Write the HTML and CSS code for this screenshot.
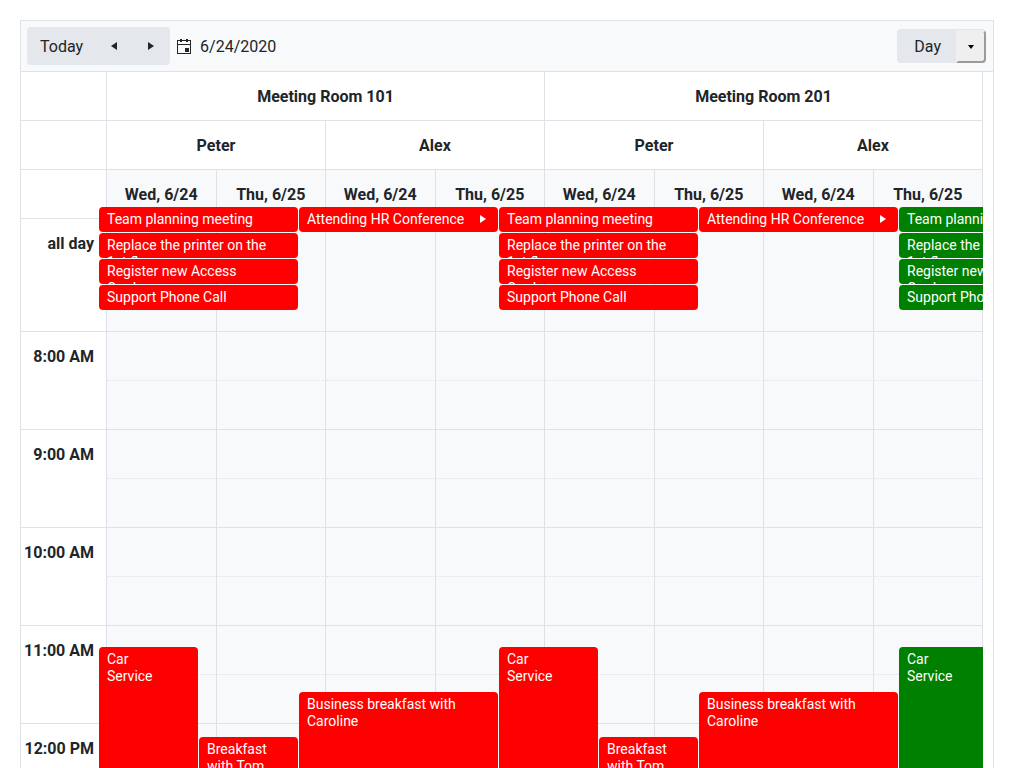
FILE: index.html
```html
<!DOCTYPE html>
<html lang="en">
<head>
<meta charset="utf-8">
<title>Scheduler</title>
<link rel="stylesheet" href="styles.css">
</head>
<body>
<main class="scheduler">
  <header class="toolbar">
    <div class="nav-group">
      <button type="button" class="btn">Today</button>
      <button type="button" class="btn btn-icon" aria-label="Previous">
        <svg width="16" height="16" viewBox="0 0 16 16" fill="currentColor"><path d="M10 4v8L4 8z"/></svg>
      </button>
      <button type="button" class="btn btn-icon" aria-label="Next">
        <svg width="16" height="16" viewBox="0 0 16 16" fill="currentColor"><path d="M4 4v8l6-4z"/></svg>
      </button>
    </div>
    <a class="current-date" href="#">
      <svg width="16" height="16" viewBox="0 0 16 16"><path d="M4 0h2v1h4V0h2v1h3v14H1V1h3zM2 2v3h12V2h-2v1h-2V2H6v1H4V2zM2 6v8h12V6zM9 9h4v4H9z" fill="currentColor" fill-rule="evenodd"/></svg>
      <span>6/24/2020</span>
    </a>
    <div class="view-group">
      <button type="button" class="btn btn-view">Day</button>
      <button type="button" class="btn-menu" aria-label="Select view">
        <svg width="16" height="16" viewBox="0 0 16 16" fill="currentColor"><path d="M5 6h6l-3 4z"/></svg>
      </button>
    </div>
  </header>

  <div class="view">
    <table class="grid">
      <colgroup><col class="col-time"><col span="8"></colgroup>
      <thead>
        <tr><td></td><th colspan="4">Meeting Room 101</th><th colspan="4">Meeting Room 201</th></tr>
        <tr><td></td><th colspan="2">Peter</th><th colspan="2">Alex</th><th colspan="2">Peter</th><th colspan="2">Alex</th></tr>
        <tr class="dates"><td></td><th>Wed, 6/24</th><th>Thu, 6/25</th><th>Wed, 6/24</th><th>Thu, 6/25</th><th>Wed, 6/24</th><th>Thu, 6/25</th><th>Wed, 6/24</th><th>Thu, 6/25</th></tr>
      </thead>
      <tbody>
        <tr class="all-day"><th>all day</th><td></td><td></td><td></td><td></td><td></td><td></td><td></td><td></td></tr>
        <tr class="hour"><th>8:00 AM</th><td></td><td></td><td></td><td></td><td></td><td></td><td></td><td></td></tr>
        <tr class="half"><th></th><td></td><td></td><td></td><td></td><td></td><td></td><td></td><td></td></tr>
        <tr class="hour"><th>9:00 AM</th><td></td><td></td><td></td><td></td><td></td><td></td><td></td><td></td></tr>
        <tr class="half"><th></th><td></td><td></td><td></td><td></td><td></td><td></td><td></td><td></td></tr>
        <tr class="hour"><th>10:00 AM</th><td></td><td></td><td></td><td></td><td></td><td></td><td></td><td></td></tr>
        <tr class="half"><th></th><td></td><td></td><td></td><td></td><td></td><td></td><td></td><td></td></tr>
        <tr class="hour"><th>11:00 AM</th><td></td><td></td><td></td><td></td><td></td><td></td><td></td><td></td></tr>
        <tr class="half"><th></th><td></td><td></td><td></td><td></td><td></td><td></td><td></td><td></td></tr>
        <tr class="hour"><th>12:00 PM</th><td></td><td></td><td></td><td></td><td></td><td></td><td></td><td></td></tr>
        <tr class="half"><th></th><td></td><td></td><td></td><td></td><td></td><td></td><td></td><td></td></tr>
      </tbody>
    </table>

    <div class="events">
      <div class="event all at-0 lane-0 wide">Team planning meeting</div>
      <div class="event all at-0 lane-1 wide">Replace the printer on the 1st floor</div>
      <div class="event all at-0 lane-2 wide">Register new Access Card</div>
      <div class="event all at-0 lane-3 wide">Support Phone Call</div>
      <div class="event all at-2 lane-0 wide">Attending HR Conference<svg class="more" width="16" height="16" viewBox="0 0 16 16" fill="currentColor"><path d="M5 4v8l6-4z"/></svg></div>
      <div class="event all at-4 lane-0 wide">Team planning meeting</div>
      <div class="event all at-4 lane-1 wide">Replace the printer on the 1st floor</div>
      <div class="event all at-4 lane-2 wide">Register new Access Card</div>
      <div class="event all at-4 lane-3 wide">Support Phone Call</div>
      <div class="event all at-6 lane-0 wide">Attending HR Conference<svg class="more" width="16" height="16" viewBox="0 0 16 16" fill="currentColor"><path d="M5 4v8l6-4z"/></svg></div>
      <div class="event all at-8 lane-0 wide green">Team planning meeting</div>
      <div class="event all at-8 lane-1 wide green">Replace the printer on the 1st floor</div>
      <div class="event all at-8 lane-2 wide green">Register new Access Card</div>
      <div class="event all at-8 lane-3 wide green">Support Phone Call</div>

      <div class="event at-0 car">Car Service</div>
      <div class="event at-1 tom">Breakfast with Tom</div>
      <div class="event at-2 caroline wide">Business breakfast with Caroline</div>
      <div class="event at-4 car">Car Service</div>
      <div class="event at-5 tom">Breakfast with Tom</div>
      <div class="event at-6 caroline wide">Business breakfast with Caroline</div>
      <div class="event at-8 car green">Car Service</div>
    </div>
  </div>
</main>
</body>
</html>
```
FILE: styles.css
```css
* { box-sizing: border-box; }

body {
  margin: 0;
  height: 100vh;
  padding: 20px 30px 0 20px;
  overflow: hidden;
  background: #fff;
  color: #212529;
  font: 16px/24px Roboto, "Liberation Sans", sans-serif;
}

button { font: inherit; color: inherit; }
svg { display: block; }

.scheduler {
  border: 1px solid #dee2e6;
  border-bottom: 0;
}

/* Toolbar */
.toolbar {
  display: flex;
  align-items: center;
  gap: 6px;
  padding: 6px 7px 6px 6px;
  background: #f8f9fb;
  border-bottom: 1px solid #dee2e6;
}
.nav-group, .view-group {
  display: flex;
  background: #e4e7eb;
  border-radius: 4px;
}
.nav-group { gap: 1px; }
.btn {
  padding: 8px 13px 6px;
  border: 0;
  background: none;
}
.btn-icon { padding: 11px 10px; }
.current-date {
  display: flex;
  align-items: center;
  gap: 8px;
  padding-top: 2px;
  color: inherit;
  text-decoration: none;
}
.view-group { margin-left: auto; }
.btn-view { padding: 6px 15px 4px 17px; }
.btn-menu {
  padding: 0 5px;
  margin-top: 1px;
  border: 2px outset #efefef;
  border-radius: 0 4px 4px 0;
  background: #efefef;
  color: #000;
}

/* Time grid */
.view {
  position: relative;
  padding-right: 10px;
}
.grid {
  width: 100%;
  table-layout: fixed;
  border-collapse: separate;
  border-spacing: 0;
}
.col-time { width: 86px; }
.grid th, .grid td {
  height: 49px;
  padding: 2px 0 0;
  border: solid #dee2e6;
  border-width: 0 1px 1px 0;
  font-weight: 700;
}
.grid .dates th, .grid tbody td { background: #f8f9fb; }
.grid tbody th {
  padding-right: 12px;
  text-align: right;
  white-space: nowrap;
}
.grid .all-day th, .grid .all-day td { height: 113px; }
.grid .all-day th {
  padding-top: 13px;
  vertical-align: top;
}
.grid .hour th { border-bottom-color: transparent; }
.grid .hour td { border-bottom-style: dotted; }

/* Events */
.events {
  position: absolute;
  inset: 0 10px 0 0;
  overflow: hidden;
}
.event {
  position: absolute;
  width: 99px;
  height: 180px;
  padding: 4px 31px 4px 8px;
  overflow: hidden;
  border-radius: 4px;
  background: #f00;
  color: #fff;
  font-size: 14px;
  line-height: 17px;
}
.wide { width: 199px; }
.green { background: #008000; }
.all { height: 25px; }
.at-0 { left: 78px; }
.at-1 { left: 178px; }
.at-2 { left: 278px; }
.at-4 { left: 478px; }
.at-5 { left: 578px; }
.at-6 { left: 678px; }
.at-8 { left: 878px; }
.lane-0 { top: 135px; }
.lane-1 { top: 161px; }
.lane-2 { top: 187px; }
.lane-3 { top: 213px; }
.car { top: 575px; }
.caroline { top: 620px; }
.tom { top: 665px; }
.more {
  position: absolute;
  top: 4px;
  right: 7px;
}
```
